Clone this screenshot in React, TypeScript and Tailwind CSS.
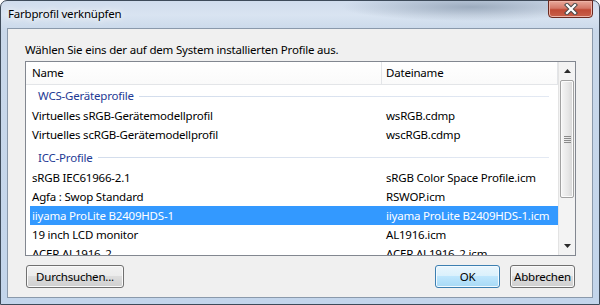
import React from "react";

type RowProps = { name: string; file: string; selected?: boolean };

function Row({ name, file, selected }: RowProps) {
  return (
    <div
      className={
        selected
          ? "shrink-0 h-[19px] ml-[4px] flex items-center bg-[#3399ff] text-white"
          : "shrink-0 h-[19px] ml-[4px] flex items-center"
      }
    >
      <div className="w-[352px] pl-[2px] whitespace-nowrap">{name}</div>
      <div className="pl-[4px] whitespace-nowrap">{file}</div>
    </div>
  );
}

function Group({ label, tall }: { label: string; tall?: boolean }) {
  return (
    <div
      className={
        tall
          ? "shrink-0 h-[24px] pt-[3px] flex items-center pl-[12px] pr-[9px] text-[#1e3a94]"
          : "shrink-0 h-[21px] pt-[1px] flex items-center pl-[12px] pr-[9px] text-[#1e3a94]"
      }
    >
      <span className="whitespace-nowrap">{label}</span>
      <div className="flex-1 h-px ml-[5px] bg-[linear-gradient(to_right,#d3ddec,#e3e9f3)]" />
    </div>
  );
}

function Scrollbar() {
  return (
    <div className="w-[17px] flex flex-col bg-[#f3f3f3] border-l border-[#e3e3e3]">
      <div className="h-[18px] flex items-center justify-center">
        <svg width="7" height="4" viewBox="0 0 7 4">
          <path d="M0 4 L3.5 0 L7 4 Z" fill="#2a2a2a" />
        </svg>
      </div>
      <div className="h-[118px] mx-[1px] rounded-[2px] border border-[#a2a2a2] bg-[linear-gradient(to_right,#f6f6f6,#e6e6e6_60%,#d6d6d6)] shadow-[inset_0_0_0_1px_#fbfbfb] flex items-center justify-center">
        <div className="flex flex-col gap-[1px]">
          <div className="w-[7px] h-px bg-[#8a8a8a]" />
          <div className="w-[7px] h-px bg-[#8a8a8a]" />
          <div className="w-[7px] h-px bg-[#8a8a8a]" />
          <div className="w-[7px] h-px bg-[#8a8a8a]" />
        </div>
      </div>
      <div className="flex-1" />
      <div className="h-[18px] flex items-center justify-center">
        <svg width="7" height="4" viewBox="0 0 7 4">
          <path d="M0 0 L7 0 L3.5 4 Z" fill="#2a2a2a" />
        </svg>
      </div>
    </div>
  );
}

export default function App() {
  return (
    <div className="w-[600px] h-[305px] overflow-hidden bg-[#ffffff] font-['Noto_Sans',sans-serif] text-[11.5px] tracking-[-0.2px] leading-[16px] text-black">
      <div className="relative w-full h-full rounded-t-[7px] border border-[#3e4b5a] bg-[radial-gradient(ellipse_130px_14px_at_470px_6px,rgba(110,128,150,0.55),transparent),linear-gradient(to_bottom,#d0dded,#d9e4f1_14px,#c9d8ea_30px,#c3d5eb)] flex flex-col">
        <div className="h-[27px] flex items-center pl-[7px] pb-[1px]">
          <span className="[text-shadow:0_0_6px_#ffffff,0_0_10px_#ffffff]">
            Farbprofil verknüpfen
          </span>
        </div>
        <div className="absolute top-[-1px] right-[6px] w-[45px] h-[18px] rounded-b-[4px] border border-[#6b2a20] bg-[linear-gradient(to_bottom,#e9a99b,#d47868_45%,#c04a35_55%,#c8614a)] shadow-[inset_0_0_0_1px_#eeb3a6] flex items-center justify-center">
          <svg width="14" height="12" viewBox="0 0 14 12">
            <path d="M3 2 L11 10 M11 2 L3 10" stroke="#4a4a4a" strokeWidth="4.2" strokeLinecap="square" />
            <path d="M3 2 L11 10 M11 2 L3 10" stroke="#ffffff" strokeWidth="2.2" strokeLinecap="square" />
          </svg>
        </div>

        <div className="flex-1 mx-[6px] mb-[6px] border border-[#8a99ab] bg-[#f0f0f0] flex flex-col pl-[17px] pr-[16px]">
          <div className="mt-[13px] h-[16px] whitespace-nowrap">
            Wählen Sie eins der auf dem System installierten Profile aus.
          </div>

          <div className="mt-[3px] h-[195px] border border-[#828790] bg-white flex overflow-hidden">
            <div className="flex-1 flex flex-col overflow-hidden">
              <div className="h-[23px] flex border-b border-[#e3e5e8] bg-[linear-gradient(to_bottom,#ffffff,#fafafa)] shrink-0">
                <div className="w-[356px] pl-[6px] flex items-center border-r border-[#e3e5e8]">
                  Name
                </div>
                <div className="flex-1 pl-[4px] flex items-center border-r border-[#e3e5e8]">
                  Dateiname
                </div>
              </div>
              <Group label="WCS-Geräteprofile" />
              <Row name="Virtuelles sRGB-Gerätemodellprofil" file="wsRGB.cdmp" />
              <Row name="Virtuelles scRGB-Gerätemodellprofil" file="wscRGB.cdmp" />
              <Group label="ICC-Profile" tall />
              <Row name="sRGB IEC61966-2.1" file="sRGB Color Space Profile.icm" />
              <Row name="Agfa : Swop Standard" file="RSWOP.icm" />
              <Row name="iiyama ProLite B2409HDS-1" file="iiyama ProLite B2409HDS-1.icm" selected />
              <Row name="19 inch LCD monitor" file="AL1916.icm" />
              <Row name="ACER AL1916_2" file="ACER AL1916_2.icm" />
            </div>
            <Scrollbar />
          </div>

          <div className="mt-[9px] flex items-center">
            <button className="ml-[1px] h-[23px] w-[98px] rounded-[3px] border border-[#707070] bg-[linear-gradient(to_bottom,#f2f2f2,#ebebeb_50%,#dddddd_50%,#cfcfcf)] shadow-[inset_0_0_0_1px_#fafafa] text-black">
              Durchsuchen...
            </button>
            <div className="flex-1" />
            <button className="h-[23px] w-[65px] rounded-[3px] border border-[#3c7fb1] bg-[linear-gradient(to_bottom,#eaf6fd,#d9f0fc_50%,#bee6fd_50%,#a7d9f5)] shadow-[inset_0_0_0_1px_#f2faff] text-black">
              OK
            </button>
            <button className="ml-[10px] mr-[1px] h-[23px] w-[65px] rounded-[3px] border border-[#707070] bg-[linear-gradient(to_bottom,#f2f2f2,#ebebeb_50%,#dddddd_50%,#cfcfcf)] shadow-[inset_0_0_0_1px_#fafafa] text-black">
              Abbrechen
            </button>
          </div>
        </div>
      </div>
    </div>
  );
}
